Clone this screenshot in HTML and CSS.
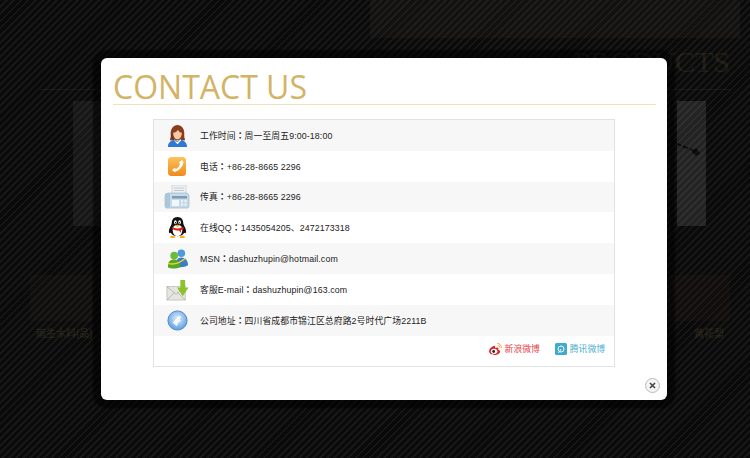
FILE: index.html
```html
<!DOCTYPE html>
<html>
<head>
<title>Contact Us</title>
<meta charset="UTF-8">
<link rel="stylesheet" href="styles.css">
</head>
<body>

<!-- dimmed page behind the dialog -->
<div class="page">
  <div class="topRow"><div class="banner"></div></div>
  <div class="headRow"><span class="headTxt">PRODUCTS</span></div>
  <div class="panelRow">
    <div class="sidePanel left"></div>
    <div class="sidePanel">
      <svg class="panelMark" width="30" height="60" viewBox="0 0 30 60">
        <path d="M-9 39L20 51" stroke="#000" stroke-width="2" stroke-dasharray="6 2"/>
        <path d="M15 51l4-4 4 5-4 3z" fill="#000"/>
      </svg>
    </div>
  </div>
  <div class="thumbRow">
    <div class="thumb"></div>
    <div class="thumb red"></div>
  </div>
  <div class="labelRow">
    <span>雨生木料(品)</span>
    <span>黄花梨</span>
  </div>
</div>

<div class="dialog">
  <h1 class="dialogTitle">CONTACT US</h1>
  <div class="infoBox">
    <ul class="infoList">
      <li class="infoRow">
        <span class="infoIcon">
          <svg width="23" height="23" viewBox="0 0 24 24">
            <path d="M5 12C4 5 8 1 12 1s8 4 7 11c0 3 1 4 1 5H4c0-1 1-2 1-5z" fill="#8a3d1c"/>
            <path d="M7.500 9c2 0 4-1 5-3 1 2 2 3 4 3 0 4-2 7-4.500 7S7.500 13 7.500 9z" fill="#f6c9a4"/>
            <path d="M2 24c0-5 4-7 7-8l3 2 3-2c3 1 7 3 7 8z" fill="#2f79d6"/>
            <path d="M9 16l3 3 3-3 1 1-4 4-4-4z" fill="#fff"/>
            <path d="M6 10c0 5 2 7 5 8" fill="none" stroke="#333" stroke-width=".8"/>
          </svg>
        </span>
        <span class="infoTxt">工作时间<span class="colon">：</span>周一至周五9:00-18:00</span>
      </li>
      <li class="infoRow">
        <span class="infoIcon">
          <svg width="24" height="24" viewBox="0 0 24 24">
            <defs>
              <linearGradient id="phoneBg" x1="0" y1="0" x2="0" y2="1">
                <stop offset="0" stop-color="#fbc35a"/>
                <stop offset="1" stop-color="#f08a1c"/>
              </linearGradient>
            </defs>
            <rect x="3" y="3" width="18" height="19" rx="3.500" fill="url(#phoneBg)"/>
            <path d="M17 6l1.500 2c-1 5-4 8.500-9 10l-2.500-2 2.500-2 1.500 1c2-1 3.500-3 4-5l-1-1.500z" fill="#fff"/>
          </svg>
        </span>
        <span class="infoTxt">电话<span class="colon">：</span>+86-28-8665 2296</span>
      </li>
      <li class="infoRow">
        <span class="infoIcon">
          <svg width="26" height="24" viewBox="0 0 26 24">
            <rect x="8" y="0" width="14" height="9" fill="#eef1f3" stroke="#b8c2c8" stroke-width=".6"/>
            <path d="M10 3h10M10 5.500h10" stroke="#b8c2c8" stroke-width=".8"/>
            <path d="M1 10l3-2h19l2 2v11l-1 2H2l-1-2z" fill="#c5dbe9" stroke="#93aebf" stroke-width=".6"/>
            <rect x="1" y="8" width="5" height="15" rx="2" fill="#a9c6da"/>
            <rect x="8" y="11" width="15" height="2.500" fill="#7d9db3"/>
            <rect x="8" y="15" width="7" height="6" fill="#f3f7fa"/>
            <path d="M17 15h2v2h-2zM20.500 15h2v2h-2zM17 18.500h2v2h-2zM20.500 18.500h2v2h-2z" fill="#eef4f8"/>
          </svg>
        </span>
        <span class="infoTxt">传真<span class="colon">：</span>+86-28-8665 2296</span>
      </li>
      <li class="infoRow">
        <span class="infoIcon">
          <svg width="23" height="23" viewBox="0 0 24 24">
            <path d="M12 1c-4 0-6 3-6 6.500 0 2-3 5-3 8.500 0 2 1 2.500 2 1.500 1 2 3 3.500 7 3.500s6-1.500 7-3.500c1 1 2 .5 2-1.500 0-3.500-3-6.500-3-8.500C18 4 16 1 12 1z" fill="#111"/>
            <ellipse cx="12" cy="15" rx="5" ry="6" fill="#fff"/>
            <ellipse cx="9.800" cy="6.500" rx="1.400" ry="2" fill="#fff"/>
            <ellipse cx="14.200" cy="6.500" rx="1.400" ry="2" fill="#fff"/>
            <circle cx="10" cy="7" r=".7" fill="#000"/>
            <circle cx="14" cy="7" r=".7" fill="#000"/>
            <path d="M8.500 9.500h7L12 11.500z" fill="#f6b31c"/>
            <path d="M6 11.500c4 2 8 2 12 0l.5 2c-1 .7-2 1-3 1.200l.5 3.300-2.500-2.800c-1.500.2-4 0-7-1.700z" fill="#e0201c"/>
            <path d="M4 22c1-2 4-2 6 0l-1 1H5zM14 22c2-2 5-2 6 0l-1 1h-4z" fill="#f6b31c"/>
          </svg>
        </span>
        <span class="infoTxt">在线QQ<span class="colon">：</span>1435054205、2472173318</span>
      </li>
      <li class="infoRow">
        <span class="infoIcon">
          <svg width="23" height="23" viewBox="0 0 24 24">
            <circle cx="16" cy="6.500" r="4" fill="#4c9ad8"/>
            <path d="M10 20c0-6 2-9 6-9s7 3 7 8c-3 2-9 3-13 1z" fill="#3a7fc4"/>
            <circle cx="8.500" cy="9" r="4" fill="#6dbb3a"/>
            <path d="M2 21c0-6 2-8 6.500-8s6 3 6 8c-4 2-9 2-12.500 0z" fill="#55a82a"/>
            <path d="M2 17c6 2 12 0 18-5" fill="none" stroke="#f6d32c" stroke-width="1.400"/>
          </svg>
        </span>
        <span class="infoTxt">MSN<span class="colon">：</span>dashuzhupin@hotmail.com</span>
      </li>
      <li class="infoRow">
        <span class="infoIcon">
          <svg width="23" height="23" viewBox="0 0 24 24">
            <rect x="1" y="9" width="19" height="14" fill="#e6e6e0" stroke="#a8a89e" stroke-width=".6"/>
            <path d="M1 9l9.500 8 9.500-8M1 23l8-8M20 23l-8-8" fill="none" stroke="#a8a89e" stroke-width=".7"/>
            <path d="M15 2h5v8h3.500l-6 9-6-9H15z" fill="#8cc22c"/>
          </svg>
        </span>
        <span class="infoTxt">客服E-mail<span class="colon">：</span>dashuzhupin@163.com</span>
      </li>
      <li class="infoRow">
        <span class="infoIcon">
          <svg width="23" height="23" viewBox="0 0 24 24">
            <defs>
              <radialGradient id="globeBg" cx=".5" cy=".4" r=".6">
                <stop offset="0" stop-color="#e2eefa"/>
                <stop offset="1" stop-color="#5c9ee0"/>
              </radialGradient>
            </defs>
            <circle cx="12" cy="12" r="10" fill="url(#globeBg)" stroke="#4a8ad0" stroke-width="1"/>
            <path d="M7 14l4-4 2-3 3 1-2 3 2 1-3 2-2 4-2-2z" fill="#f4f8fc"/>
          </svg>
        </span>
        <span class="infoTxt">公司地址<span class="colon">：</span>四川省成都市锦江区总府路2号时代广场2211B</span>
      </li>
    </ul>
    <div class="weiboLinks">
      <a class="weiboLink sina">
        <svg width="13" height="12" viewBox="0 0 14 13">
          <path d="M5.500 3C2.500 4 0 6.500 0 9c0 2.300 2.700 4 6 4 3.500 0 6-2 6-3.800 0-1.300-1.200-1.800-2-2 .3-.9.300-1.700-.3-2.100-.8-.5-2.100 0-3 .5 .3-1.300-.2-3-1.200-2.600z" fill="#e0242c"/>
          <ellipse cx="5.500" cy="9" rx="3.500" ry="2.800" fill="#fff"/>
          <circle cx="5" cy="9.200" r="1.500" fill="#222"/>
          <path d="M9 .5c2.500 0 4.500 2 4.200 5M9.300 2.600c1.300 0 2.200 1 2 2.300" fill="none" stroke="#f09a24" stroke-width="1"/>
        </svg>
        新浪微博
      </a>
      <a class="weiboLink qq">
        <svg width="12" height="12" viewBox="0 0 12 12">
          <rect width="12" height="12" rx="1.500" fill="#3fa9cf"/>
          <circle cx="6" cy="6" r="3" fill="none" stroke="#fff" stroke-width="1"/>
          <path d="M6 6L3.500 10" stroke="#fff" stroke-width="1"/>
        </svg>
        腾讯微博
      </a>
    </div>
  </div>
  <div class="dialogFoot">
    <button class="closeBtn">
      <svg width="7" height="7" viewBox="0 0 7 7">
        <path d="M1 1l5 5M6 1L1 6" stroke="#444" stroke-width="1.600"/>
      </svg>
    </button>
  </div>
</div>

</body>
</html>
```

FILE: styles.css
```css
html, body {
  margin: 0;
  padding: 0;
  height: 100%;
  overflow: hidden;
  font-family: "Liberation Sans", "Noto Sans CJK SC", sans-serif;
}
body {
  position: relative;
  background-color: #0b0b0b;
  background-image: repeating-linear-gradient(-45deg, #0a0a0a 0, #0a0a0a 3px, #171717 3px, #171717 5px);
}

/* page behind the overlay */
.page {
  height: 100%;
  box-sizing: border-box;
  opacity: 0.1;
}
.topRow {
  height: 38px;
  display: flex;
  justify-content: flex-end;
  padding-right: 10px;
}
.banner {
  width: 370px;
  background: #605540;
}
.headRow {
  height: 44px;
  margin: 0 20px 0 40px;
  padding-top: 7px;
  text-align: right;
  border-bottom: 1px solid #888;
  box-sizing: content-box;
}
.headTxt {
  font: 30px "Liberation Serif", serif;
  color: #c8a860;
}
.panelRow {
  display: flex;
  justify-content: space-between;
  margin: 11px 44px 0 73px;
  height: 125px;
}
.sidePanel {
  width: 29px;
  background: #fff;
}
.sidePanel.left {
  background: #888;
}
.panelMark {
  display: block;
  overflow: visible;
}
.thumbRow {
  display: flex;
  justify-content: space-between;
  margin: 49px 20px 0 30px;
  height: 46px;
}
.thumb {
  width: 62px;
  background: #403528;
}
.thumb.red {
  background: #502828;
}
.labelRow {
  display: flex;
  justify-content: space-between;
  margin: 4px 26px 0 36px;
  font-size: 10px;
  font-weight: bold;
  color: #d4b868;
}

/* dialog */
.dialog {
  position: absolute;
  top: 58px;
  left: 101px;
  width: 566px;
  height: 342px;
  box-sizing: border-box;
  padding: 0 11px 0 12px;
  background: #fff;
  border-radius: 6px;
  box-shadow: 0 0 2px 8px rgba(0,0,0,0.55);
  display: flex;
  flex-direction: column;
}
.dialogTitle {
  margin: 0;
  height: 46px;
  line-height: 58px;
  box-sizing: content-box;
  font-family: "Open Sans", sans-serif;
  font-size: 32px;
  font-weight: normal;
  color: #d3b366;
  border-bottom: 1px solid #efe2bb;
}
.infoBox {
  width: 462px;
  height: 248px;
  box-sizing: border-box;
  margin: 14px 0 0 40px;
  border: 1px solid #e2e2e2;
}
.infoList {
  list-style: none;
  margin: 0;
  padding: 0;
}
.infoRow {
  height: 30.8px;
  display: flex;
  align-items: center;
  font-size: 8.8px;
  letter-spacing: 0.12px;
  color: #222;
}
.infoRow:nth-child(odd) {
  background: #f7f7f7;
}
.infoIcon {
  width: 46px;
  display: flex;
  justify-content: center;
}
.infoTxt {
  white-space: nowrap;
}
/* TC glyph keeps the fullwidth colon centred in its box */
.colon {
  font-family: "Noto Sans CJK TC", sans-serif;
  font-weight: bold;
}
.weiboLinks {
  height: 26px;
  display: flex;
  justify-content: flex-end;
  align-items: center;
  gap: 15px;
  padding-right: 9px;
  font-size: 8.8px;
}
.weiboLink {
  display: flex;
  align-items: center;
  gap: 3px;
}
.weiboLink.sina { color: #e5404a; }
.weiboLink.qq { color: #4fb0d0; }
.dialogFoot {
  display: flex;
  justify-content: flex-end;
  padding: 11px 0 0;
}
.closeBtn {
  width: 15px;
  height: 15px;
  padding: 0;
  margin-right: -4px;
  border: 1px solid #bbb;
  border-radius: 50%;
  background: #f4f4f4;
  display: flex;
  align-items: center;
  justify-content: center;
}
```
